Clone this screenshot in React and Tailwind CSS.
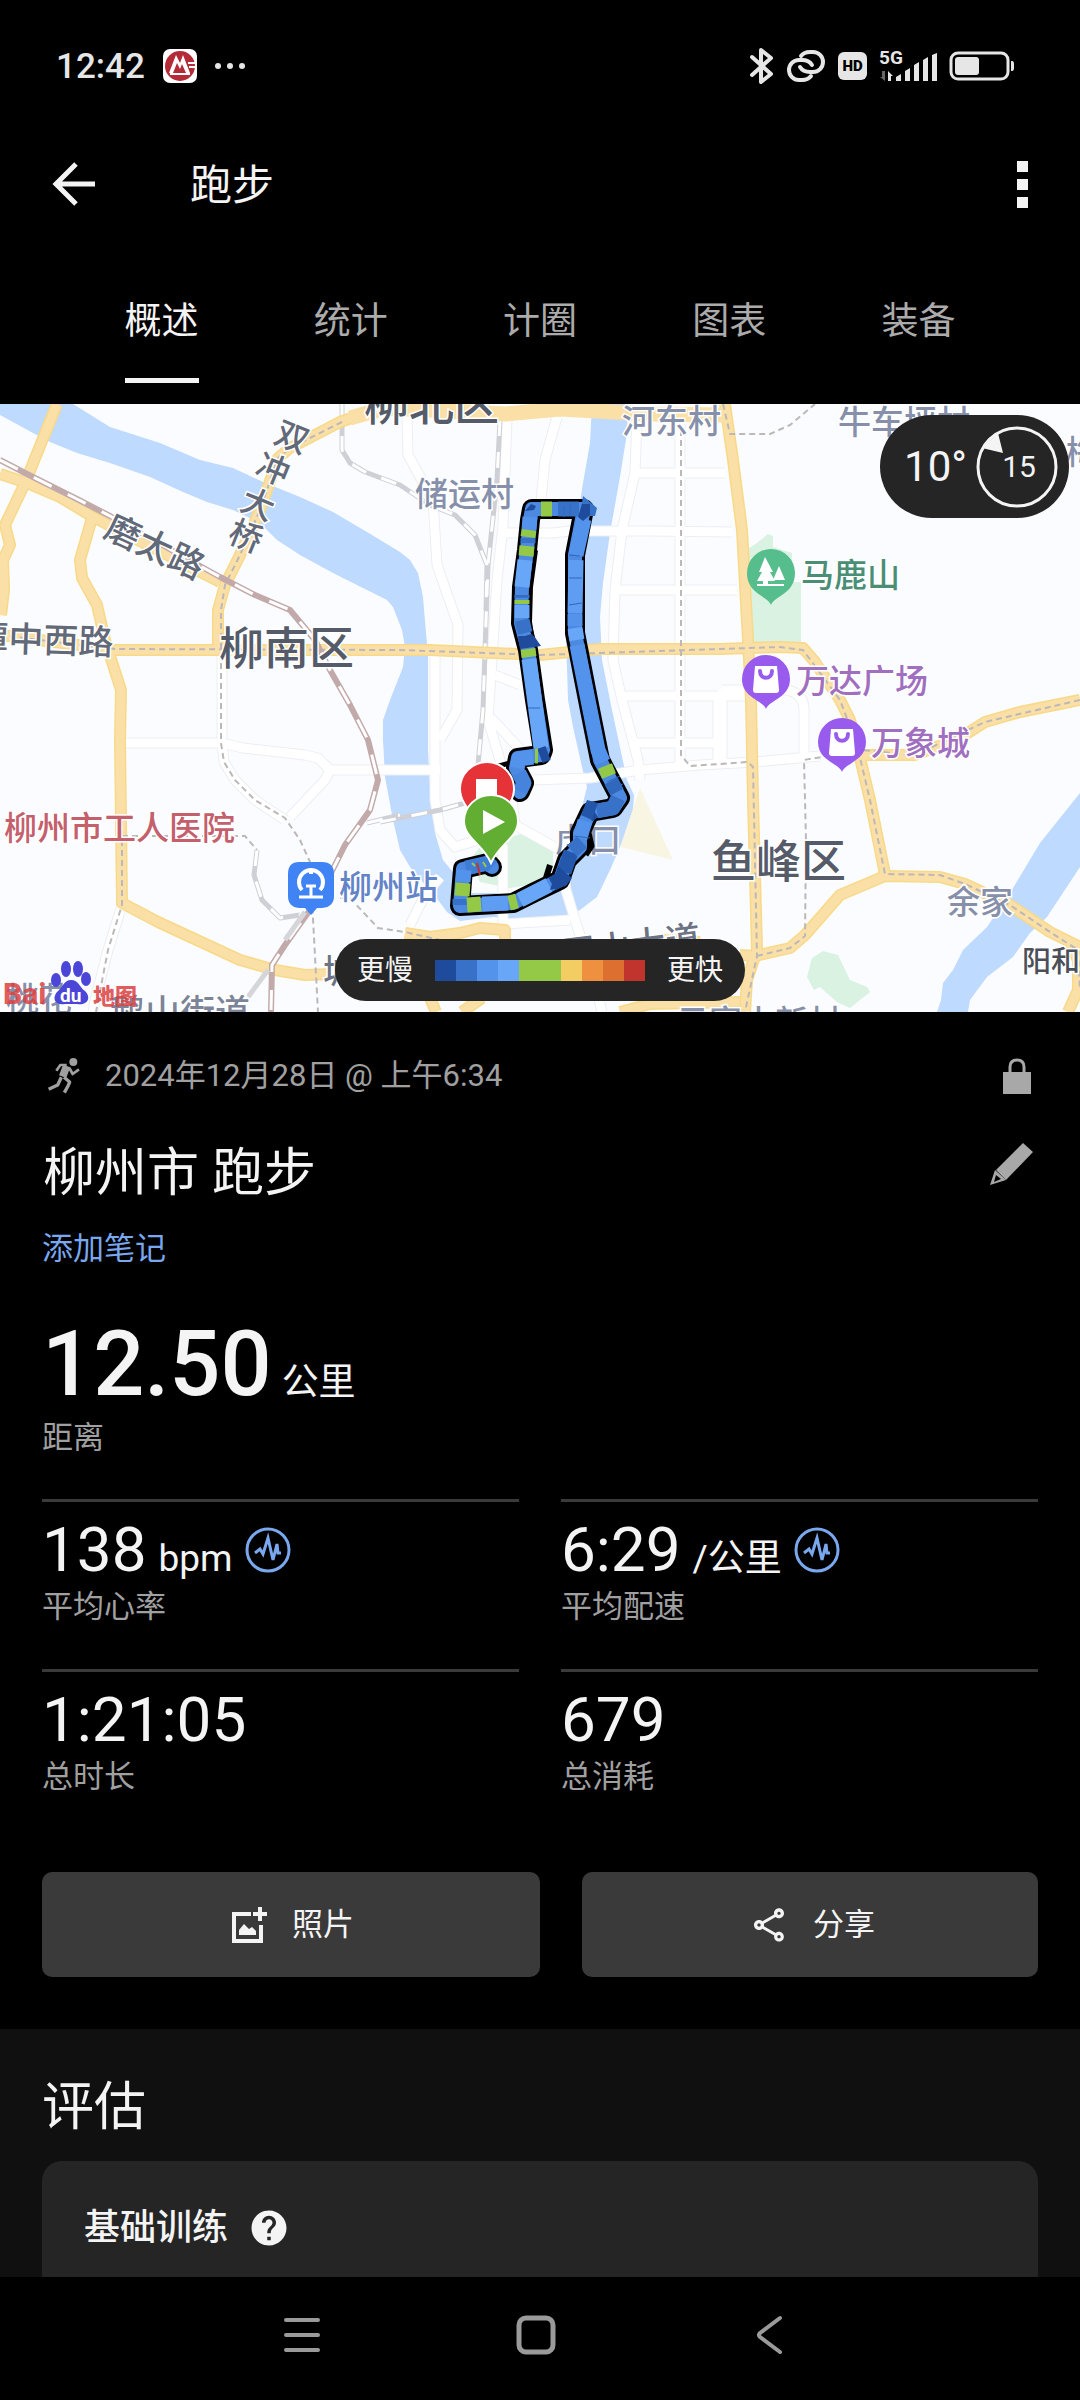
import { useState } from "react";
import { MdHelp, MdOutlineShare } from "react-icons/md";

const TABS = ["概述", "统计", "计圈", "图表", "装备"];

const PACE_COLORS = [
  "#1f4b9c", "#3772c8", "#5393eb", "#68a6f8", "#93c947",
  "#93c947", "#f3cd62", "#ee9040", "#dd7030", "#c0342d",
];

const STATS = [
  { value: "138", unit: "bpm", label: "平均心率", zones: true },
  { value: "6:29", unit: "/公里", label: "平均配速", zones: true },
  { value: "1:21:05", label: "总时长" },
  { value: "679", label: "总消耗" },
];

// Map geometry, all in the map's own viewBox units
const RIVERS = [
  "M0 4H73L110 27 160 43 200 60 233 68 263 82 300 97 333 112 367 132 400 152 410 160 418 173 423 197 426 233 428 253V350L430 387 435 433 443 460 470 493H520L540 490 557 467 577 427 587 387 582 367 573 327 568 300 567 267 565 217 567 187 583 83 590 43 592 4H628L627 33 620 77 610 133 603 183 600 217 602 260 612 310 627 380 634 395 632 427 620 447 610 470 597 497 580 510 563 517 537 521 493 517 460 521 447 512 438 500 410 467 400 450 393 420 385 377 383 340 383 320 390 300 403 267 405 247 402 230 393 207 387 200 367 190 333 173 300 155 277 140 260 123 233 110 207 102 183 92 150 77 110 63 77 53 50 42 33 33 0 15Z",
  "M1080 393 1040 443 1010 493 987 527 963 550 953 570 943 583 941 600 937 612H968L970 600 987 577 1013 557 1030 533 1047 517 1080 467Z",
];

const PARKS = [
  "M480 447 523 433 553 447V467L547 482 510 488 480 482 470 460Z",
  "M743 152 757 143 768 134 773 136V147L792 153V182H801V242H752Z",
  "M823 551 838 555 850 580 867 587 870 592 850 608 837 602 820 587 814 590 807 577 812 558Z",
];

const STREETS = [
  "M123 343H222L243 348 305 355 318 358 330 370 325 380 290 417",
  "M330 370H440M222 250V343L224 362 235 380 255 400 285 420",
  "M407 17 408 55 433 100 437 165 458 225 457 310 440 340",
  "M435 257V400L440 430 455 447 478 440M440 477 425 495 410 525",
  "M557 17 545 60 540 110M507 20 503 125 497 180 492 260 488 320 512 400 515 425 560 450 566 490 575 520 590 565 602 612",
  "M503 133H553L570 131H650L732 132M495 275 520 285M491 318 530 360",
  "M637 17 635 73 622 130 615 190 613 260 622 300 638 360 640 380",
  "M636 73H725M615 190H737M680 10V366M625 296H757M636 343H720M718 296V362",
  "M532 380 590 378 640 370 700 365 755 362 820 356",
  "M722 290H785Q804 292 804 310V357M722 290V362",
  "M503 445V530M122 505 108 550 95 600 93 612M505 524 570 520",
];

const HIGHWAYS = [
  "M57 4 25 83 5 125 10 145 3 160 4 190 1 215",
  "M0 74 27 83 60 97 95 118 220 182",
  "M92 118 80 160 82 178 97 205 105 240 113 265 121 290 120 340 122 503 158 522 240 560 275 570 305 575 332 574",
  "M0 235 55 242 115 250H220L430 250 540 255 600 249 720 249 780 247 803 248 815 262 840 300 850 320 857 345 870 400 885 474",
  "M380 8 340 22 290 48 278 58 260 110 240 155 225 185 218 210V250",
  "M725 4 733 60 742 130 748 240 751 300 753 400 757 550 747 580 745 612",
  "M740 555 755 556 790 548 805 535 840 495 885 476 940 477 965 484 1010 505 1050 532 1080 547M1070 545 1078 560V590L1068 612",
  "M862 355 915 355 960 338 985 322 1020 312 1080 300",
  "M405 533 430 537 460 533 480 528 505 530V545M430 598 436 612M482 598 462 612",
  "M620 612 650 604 740 602M660 540 700 542",
];

const SUBWAYS = [
  "M342 22 290 48 278 58 260 110 240 155 225 185 221 210 221 343 224 362 235 380 255 400 285 418 300 440 310 462 312 500 318 612",
  "M0 235 55 242 115 249 400 250 540 255 720 249 780 247 803 250 815 266 840 300 857 345 870 400 885 474 940 475 965 484 1010 505 1050 532 1078 550 1080 590",
  "M122 420V505L108 550 96 612M122 436H245L257 450",
  "M681 30V355L690 366 748 362 753 367 757 556 745 612M757 556 790 548 805 536 806 440 804 360 862 350 915 355 985 322 1080 300",
  "M723 4 730 34H770L790 25 815 4M340 498H350L378 528 405 532 440 540",
];

const GREY_RAILS = [
  "M342 4V50L350 63 365 72 400 85 430 105 455 115 475 135 487 165 486 210",
  "M500 20 497 80 488 165 485 250 483 310 478 365",
  "M380 422 440 410 465 403M367 423 400 415M257 450 254 475 262 500 280 518 300 515",
];

const RAIL = "M0 60 27 74 75 98 110 116 220 177 255 195 290 210 315 240 330 270 350 305 368 340 378 380 370 410 345 445 330 475 310 510 285 545 272 565 271 612";

const ROUTE = "492 467 488 463 463 469 460 506 513 503 535 492 560 480 567 460 580 447 580 433 590 412 613 408 620 398 600 360 590 310 575 233 575 155 584 109 532 109 530 120 527 150 522 187 521 223 528 250 535 300 543 350 541 355 518 358 516 368 524 383 520 392";

const ROUTE_PARTS = [
  ["#3f7cd6", "492 467 488 463 466 468"],
  ["#5393eb", "464 470 463 482"],
  ["#93c947", "463 483 462 496"],
  ["#3772c8", "460 499 460 505"],
  ["#93c947", "467 505 481 504"],
  ["#5e9df1", "482 504 508 503"],
  ["#93c947", "509 503 517 501"],
  ["#68a6f8", "520 500 549 485"],
  ["#1f4b9c", "552 484 563 478"],
  ["#2458ac", "564 472 571 452"],
  ["#3772c8", "572 451 582 442"],
  ["#5393eb", "580 438 585 421"],
  ["#1f4b9c", "588 415 594 411"],
  ["#3772c8", "597 411 613 408 618 398"],
  ["#2f68bd", "617 392 611 381"],
  ["#93c947", "609 376 605 366"],
  ["#5393eb", "603 362 598 350 590 310 577 245"],
  ["#68a6f8", "577 240 575 228"],
  ["#5393eb", "575 226 575 214"],
  ["#5e9df1", "575 213 576 160"],
  ["#5393eb", "576 155 584 119"],
  ["#3772c8", "579 109 558 109"],
  ["#93c947", "552 109 541 109"],
  ["#5393eb", "530 117 529 130"],
  ["#93c947", "529 130 528 137"],
  ["#3772c8", "528 138 528 143"],
  ["#93c947", "527 146 526 156"],
  ["#68a6f8", "525 160 522 187"],
  ["#3772c8", "522 195 522 198"],
  ["#93c947", "522 200 522 204"],
  ["#68a6f8", "522 205 522 218"],
  ["#3772c8", "522 220 525 233"],
  ["#1f4b9c", "525 236 528 246"],
  ["#93c947", "528 249 529 257"],
  ["#68a6f8", "529 259 541 348"],
  ["#1f4b9c", "548 353 540 356"],
  ["#93c947", "538 356 535 356"],
  ["#5393eb", "533 357 519 359 517 368"],
  ["#4583dc", "519 373 524 383 520 391"],
];

const LABELS = [
  { text: "柳北区", x: 364, y: 21, size: 45, color: "#555b69" },
  { text: "柳南区", x: 219, y: 265, size: 45, color: "#555b69" },
  { text: "鱼峰区", x: 711, y: 478, size: 45, color: "#555b69" },
  { text: "河东村", x: 622, y: 33, size: 33, color: "#8790aa" },
  { text: "牛车坪村", x: 838, y: 34, size: 33, color: "#8790aa" },
  { text: "储运村", x: 415, y: 106, size: 33, color: "#8790aa" },
  { text: "梅", x: 1066, y: 64, size: 33, color: "#8790aa" },
  { text: "余家", x: 947, y: 514, size: 33, color: "#8790aa" },
  { text: "虎口", x: 555, y: 452, size: 33, color: "#8790aa" },
  { text: "阳和", x: 1022, y: 572, size: 29, color: "#4b4f5a" },
  { text: "屏山大道", x: 563, y: 567, size: 35, color: "#6c7385", rotate: -7 },
  { text: "城", x: 323, y: 583, size: 33, color: "#6c7385" },
  { text: "桃花", x: 6, y: 611, size: 33, color: "#8790aa" },
  { text: "鹅山街道", x: 110, y: 625, size: 35, color: "#7b8499" },
  { text: "云富山新村", x: 676, y: 634, size: 33, color: "#8790aa" },
  { text: "潭中西路", x: -27, y: 250, size: 35, color: "#626979", rotate: 2 },
  { text: "磨太路", x: 102, y: 136, size: 35, color: "#626979", rotate: 25 },
  { text: "柳州市工人医院", x: 4, y: 440, size: 33, color: "#c4606c" },
  { text: "柳州站", x: 339, y: 499, size: 33, color: "#6384c8" },
  { text: "马鹿山", x: 801, y: 187, size: 33, color: "#4a8f75" },
  { text: "万达广场", x: 796, y: 293, size: 33, color: "#a06fc0" },
  { text: "万象城", x: 871, y: 355, size: 33, color: "#a06fc0" },
];

// Bridge name runs down the road, one tilted character at a time
const BRIDGE_LABEL = [
  { char: "双", x: 292, y: 37 },
  { char: "冲", x: 273, y: 69 },
  { char: "大", x: 258, y: 104 },
  { char: "桥", x: 246, y: 136 },
];

function RouteMap() {
  return (
    <svg className="block w-full h-full" viewBox="0 4 1080 608" preserveAspectRatio="xMidYMid slice" fill="none" role="img" aria-label="路线地图">
      <rect y="4" width="1080" height="608" fill="#fbfcff" />
      {RIVERS.map(d => <path key={d} d={d} fill="#bfdaff" />)}
      <path d="M443 455 480 440 560 452 550 490 470 490Z" fill="#fbfcff" />
      {PARKS.map(d => <path key={d} d={d} fill="#d9f2e1" />)}
      <path d="M640 388 673 460 620 447Z" fill="#f8f6e3" />

      <g strokeLinejoin="round">
        {STREETS.map(d => <path key={d} d={d} stroke="#eceef3" strokeWidth="11" />)}
        {STREETS.map(d => <path key={d} d={d} stroke="#ffffff" strokeWidth="9" />)}
        {GREY_RAILS.map(d => <path key={d} d={d} stroke="#cfd0d6" strokeWidth="5" />)}
        {GREY_RAILS.map(d => <path key={d} d={d} stroke="#fff" strokeWidth="3" strokeDasharray="16 16" />)}
        {HIGHWAYS.map(d => <path key={d} d={d} stroke="#f7d988" strokeWidth="12" />)}
        {HIGHWAYS.map(d => <path key={d} d={d} stroke="#fae0a6" strokeWidth="9" />)}
        <path d="M350 18 385 8 430 10 505 14 560 9 650 14 728 15" stroke="#fae0a6" strokeWidth="15" />
        <path d="M500 10V20" stroke="#fae0a6" strokeWidth="18" />
        {SUBWAYS.map(d => <path key={d} d={d} stroke="#bdb8b8" strokeWidth="2" strokeDasharray="6 4" />)}
        <path d={RAIL} stroke="#c3aaaa" strokeWidth="6" />
        <path d={RAIL} stroke="#fff" strokeWidth="3" strokeDasharray="20 18" />
        <path d="M305 512 285 540M268 570 248 597" stroke="#d5d5da" strokeWidth="5" />
      </g>

      {LABELS.map(l => (
        <text
          key={l.text}
          x={l.x}
          y={l.y}
          fontSize={l.size}
          fill={l.color}
          stroke="#fff"
          strokeWidth="3"
          paintOrder="stroke"
          fontWeight="500"
          transform={l.rotate ? `rotate(${l.rotate} ${l.x} ${l.y})` : undefined}
        >
          {l.text}
        </text>
      ))}
      {BRIDGE_LABEL.map(c => (
        <text key={c.char} x={c.x} y={c.y + 12} fontSize="33" fill="#626979" stroke="#fff" strokeWidth="3" paintOrder="stroke" fontWeight="500" textAnchor="middle" transform={`rotate(22 ${c.x} ${c.y})`}>
          {c.char}
        </text>
      ))}

      {/* recorded track: black casing, then the pace colours */}
      <g strokeLinejoin="round">
        <polyline points={ROUTE} stroke="#000" strokeWidth="20" strokeLinecap="round" />
        <path d="M535 150 530 187 529 222 547 340M550 465 546 478" stroke="#000" strokeWidth="6" />
        <path d="M588 428 592 446 586 455M495 367 510 363" stroke="#000" strokeWidth="5" />
        <polyline points={ROUTE} stroke="#4c8ae2" strokeWidth="14" strokeLinecap="round" />
        {ROUTE_PARTS.map(([color, points]) => <polyline key={points} points={points} stroke={color} strokeWidth="15" />)}
        <path d="M583 96 597 108 595 116 580 116Z" fill="#3772c8" />
        <path d="M582 104 590 104 590 115 583 121 578 117Z" fill="#1f4b9c" />
        <path d="M525 111 531 104 536 106 534 110Z" fill="#1f4b9c" />
        <path d="M518 236 534 236 541 246 520 249Z" fill="#1f4b9c" />
        <path d="M587 400 598 403 592 420 581 415Z" fill="#2355a8" />
        <path d="M558 466 572 478 566 486 550 490Z" fill="#1f4b9c" />
        <path d="M607 382 620 376M610 388 623 384M569 155 580 156M569 178H582M569 205 582 203M564 106V117M570 103V116M515 196H528M528 308H540M574 436 590 438" stroke="#2f68bd" strokeWidth="1" />
        <path d="M477 463 480 475" stroke="#c0342d" strokeWidth="2" />
        <path d="M472 463 475 466M483 462 486 467" stroke="#93c947" strokeWidth="2" />
      </g>

      {/* finish and start pins */}
      <g stroke="#fff" strokeWidth="2">
        <path d="M487 434C475 415 460 405 460 389A27 27 0 0 1 514 389C514 405 499 415 487 434Z" fill="#e63338" />
        <rect x="477" y="380" width="19" height="19" fill="#fff" />
        <path d="M491 463C482 443 464 438 464 421A27 26 0 0 1 518 421C518 438 500 443 491 463Z" fill="#62ae33" />
      </g>
      <path d="M483 410 505 422 483 434Z" fill="#fff" />

      {/* park */}
      <path d="M771 205C768 196 747 194 747 173A24 24 0 0 1 795 173C795 194 774 196 771 205Z" fill="#56bd8d" />
      <path d="M765 157 773 172H770L775 181H768V184H784V186H757V184H763V181H757L762 172H759Z" fill="#fff" />
      <path d="M779 166 785 180H773Z" fill="#fff" />
      {/* malls */}
      {[[766, 279], [842, 342]].map(([x, y]) => (
        <g key={x} transform={`translate(${x} ${y})`}>
          <path d="M0 30C-3 21 -24 19 -24 0A24 24 0 0 1 24 0C24 19 3 21 0 30Z" fill="#985bee" />
          <path d="M-11 -13H11L13 11Q13 14 10 14H-10Q-13 14 -13 11Z" fill="#fff" />
          <path d="M-6 -8C-6 1 6 1 6 -8" stroke="#985bee" strokeWidth="4" strokeLinecap="round" />
        </g>
      ))}
      {/* railway station */}
      <path d="M299 462H322Q334 462 334 474V496Q334 507 322 508H317L311 515 305 508H299Q288 507 288 496V474Q288 462 299 462Z" fill="#3f83f5" />
      <path d="M302 490A12 12 0 1 1 320 490M311 470V474" stroke="#fff" strokeWidth="4" />
      <path d="M306 486H316M311 486V497M299 497H323" stroke="#fff" strokeWidth="3" />

      {/* map provider logo */}
      <g fontWeight="800" fill="#dc3f3f" fillOpacity="0.85">
        <text x="3" y="604" fontSize="30">Bai</text>
        <text x="93" y="604" fontSize="22">地图</text>
      </g>
      <g fill="#4b45d8">
        <ellipse cx="66" cy="569" rx="5" ry="8" />
        <ellipse cx="78" cy="569" rx="5" ry="8" />
        <ellipse cx="56" cy="580" rx="5" ry="7" />
        <ellipse cx="86" cy="579" rx="5" ry="7" />
        <path d="M71 580C79 580 79 587 85 591 92 598 87 606 77 604H65C55 606 51 598 58 591 63 587 64 580 71 580Z" />
      </g>
      <text x="60" y="602" fontSize="19" fontWeight="700" fill="#fff">du</text>
    </svg>
  );
}

function StatusBar() {
  return (
    <div className="h-[132px] shrink-0 pl-14 pr-[65px] flex items-center justify-between text-[#e6e6e6]">
      <div className="flex items-center gap-[18px]">
        <span className="text-[35px] leading-none font-medium">12:42</span>
        <svg className="w-[34px] h-[34px]" viewBox="0 0 34 34" fill="none">
          <rect width="34" height="34" rx="7" fill="#fff" />
          <circle cx="17" cy="17" r="15" fill="#b42a37" />
          <path d="M6 24 13 6 17 14 20 6 27 24H23L19 15 17 20 14 14 10 24Z" fill="#fff" />
          <path d="M7 25H27M25 14H32M26 18H32" stroke="#fff" strokeWidth="2" />
        </svg>
        <span className="flex gap-1.5">
          <i className="size-1.5 rounded-full bg-[#e6e6e6]" />
          <i className="size-1.5 rounded-full bg-[#e6e6e6]" />
          <i className="size-1.5 rounded-full bg-[#e6e6e6]" />
        </span>
      </div>
      <div className="flex items-center gap-3">
        <svg className="w-6 h-9" viewBox="0 0 24 36" fill="none" stroke="currentColor" strokeWidth="4" strokeLinejoin="round" strokeLinecap="round">
          <path d="M2 9 21 26 11 34V2L21 10 2 27" />
        </svg>
        <svg className="w-10 h-8" viewBox="0 0 40 32" fill="none" stroke="currentColor" strokeWidth="4" strokeLinecap="round">
          <path d="M15 6Q18 2 24 2H27A10 10 0 0 1 27 22H24Q17 22 14 17" />
          <path d="M25 26Q22 30 16 30H13A10 10 0 0 1 13 10H16Q23 10 26 15" />
        </svg>
        <span className="w-[29px] h-7 rounded-md bg-[#e6e6e6] text-black text-[15px] leading-7 font-black text-center">HD</span>
        <div className="relative w-[58px] h-8">
          <span className="block text-[19px] leading-4 font-bold">5G</span>
          <svg className="absolute inset-0 w-[58px] h-8" viewBox="0 0 58 32" fill="currentColor">
            <path d="M3 21H6V31L1 27H3Z" fill="#666" />
            <path d="M9 31V21L14 26H12V31ZM17 31V27L22 24V31ZM26 31V21L31 18V31ZM35 31V15L40 12V31ZM44 31V10L49 7V31ZM53 31V5L58 3V31Z" />
          </svg>
        </div>
        <svg className="w-[66px] h-[30px]" viewBox="0 0 66 30" fill="none">
          <rect x="2" y="2" width="57" height="26" rx="7" stroke="currentColor" strokeWidth="3" />
          <rect x="6" y="6" width="24" height="18" rx="3" fill="currentColor" />
          <path d="M62 10H63Q65 10 65 13V17Q65 20 63 20H62Z" fill="currentColor" />
        </svg>
      </div>
    </div>
  );
}

function ZonesIcon() {
  return (
    <svg className="size-[46px] self-center" viewBox="0 0 46 46" fill="none" stroke="#79a8ee">
      <circle cx="23" cy="23" r="21" strokeWidth="3" />
      <path d="M10 26 15 22 18 27 23 11 28 33 32 17 33 26H36" strokeWidth="3" />
    </svg>
  );
}

function RunnerIcon() {
  return (
    <svg className="w-9 h-10" viewBox="132 136 108 120" fill="none" stroke="#a0a0a0" strokeLinejoin="round">
      <circle cx="214" cy="154" r="12" fill="#a0a0a0" stroke="none" />
      <path d="M163 180 175 163 194 163M202 172 212 190 231 176" strokeWidth="8" />
      <path d="M194 166 182 198" strokeWidth="23" />
      <path d="M186 200 203 214 198 226 187 246" strokeWidth="10" />
      <path d="M178 200 167 223 140 236" strokeWidth="10" />
    </svg>
  );
}

export default function App() {
  const [activeTab, setActiveTab] = useState(TABS[0]);

  return (
    <div className="min-h-screen flex flex-col bg-black text-[#f4f4f4] font-['Roboto','Noto_Sans_CJK_SC',sans-serif]">
      <StatusBar />

      <header className="h-[104px] shrink-0 flex items-center px-[52px]">
        <button aria-label="返回" className="w-[44px] h-[44px]">
          <svg viewBox="0 0 44 44" fill="none" stroke="currentColor" strokeWidth="5">
            <path d="M43 22H5M24 2 4 22 24 42" />
          </svg>
        </button>
        <h1 className="ml-[94px] pt-1 text-[42px] leading-none">跑步</h1>
        <button aria-label="更多" className="ml-auto flex flex-col gap-[7px]">
          <i className="size-[11px] bg-[#f4f4f4]" />
          <i className="size-[11px] bg-[#f4f4f4]" />
          <i className="size-[11px] bg-[#f4f4f4]" />
        </button>
      </header>

      <nav className="grid grid-cols-5 shrink-0 px-[67px]">
        {TABS.map(tab => (
          <button
            key={tab}
            onClick={() => setActiveTab(tab)}
            className={`flex flex-col items-center pt-16 pb-[21px] text-[37px] leading-[44px] ${tab === activeTab ? "text-[#f4f4f4]" : "text-[#ababab]"}`}
          >
            <span>{tab}</span>
            <span className={`mt-[34px] w-[74px] h-[5px] ${tab === activeTab ? "bg-[#f4f4f4]" : ""}`} />
          </button>
        ))}
      </nav>

      <section className="relative h-[608px] shrink-0 overflow-hidden">
        <RouteMap />

        <div className="absolute top-[11px] right-[11px] h-[103px] pl-6 pr-[11px] flex items-center gap-[9px] rounded-full bg-[#252525]">
          <span className="text-[42px] leading-none">10°</span>
          <div className="relative size-[82px] flex items-center justify-center">
            <svg className="absolute inset-0" viewBox="0 0 82 82" fill="none">
              <circle cx="41" cy="41" r="39" stroke="#f4f4f4" strokeWidth="3" />
              <path d="M22 7 27 27 6 22Z" fill="#f4f4f4" />
            </svg>
            <span className="pl-1 text-[30px] leading-none">15</span>
          </div>
        </div>

        <div className="absolute inset-x-0 bottom-[11px] flex justify-center">
          <div className="h-[62px] px-[22px] flex items-center gap-[22px] rounded-full bg-[#252525] text-[28px] leading-none">
            <span className="pt-0.5">更慢</span>
            <div className="flex">
              {PACE_COLORS.map((color, i) => (
                <i key={i} className="size-[21px]" style={{ backgroundColor: color }} />
              ))}
            </div>
            <span className="pt-0.5">更快</span>
          </div>
        </div>
      </section>

      <main className="shrink-0 px-[42px] pt-10 pb-[52px]">
        <div className="h-12 pl-1 flex items-center text-[31px] text-[#a0a0a0]">
          <RunnerIcon />
          <span className="ml-[23px] leading-10">2024年12月28日 @ 上午6:34</span>
          <svg className="ml-auto mr-1.5 w-[30px] h-9" viewBox="0 0 30 36">
            <path d="M1 14H29V36H1Z" fill="#a8a8a8" />
            <path d="M8 17V9Q8 2 15 2T22 9V17" fill="none" stroke="#a8a8a8" strokeWidth="3" />
          </svg>
        </div>

        <div className="mt-[38px] flex justify-between items-start">
          <h2 className="pl-px text-[52px] leading-[72px]">柳州市 跑步</h2>
          <button aria-label="编辑" className="h-[52px] mr-1 flex items-center">
            <svg className="size-11" viewBox="0 0 44 44" fill="#a8a8a8">
              <path d="M33 1 43 10 16 38 6 28Z" />
              <path d="M5 28 16 38 0 43ZM6 33 4 40 11 37Z" fillRule="evenodd" />
            </svg>
          </button>
        </div>

        <a href="#notes" className="mt-[19px] block w-fit text-[31px] leading-10 text-[#79a8ee]">添加笔记</a>

        <div className="mt-[51px] flex items-baseline gap-2.5">
          <span className="text-[90px] leading-[90px] font-medium">12.50</span>
          <span className="text-[37px] leading-none">公里</span>
        </div>
        <p className="mt-2 text-[31px] leading-10 text-[#a0a0a0]">距离</p>

        <div className="mt-[41px] grid grid-cols-2 gap-x-[42px] gap-y-[42px]">
          {STATS.map(stat => (
            <div key={stat.label} className="border-t-3 border-[#3a3a3a] pt-[17px]">
              <div className="h-[62px] flex items-baseline gap-3">
                <span className="text-[62px] leading-[62px]">{stat.value}</span>
                {stat.unit && <span className="text-[37px] leading-none">{stat.unit}</span>}
                {stat.zones && <ZonesIcon />}
              </div>
              <p className="mt-1.5 text-[31px] leading-10 text-[#a0a0a0]">{stat.label}</p>
            </div>
          ))}
        </div>

        <div className="mt-[75px] grid grid-cols-[498fr_456fr] gap-[42px] text-[31px]">
          <button className="h-[105px] pl-1 flex items-center justify-center gap-6 rounded-[10px] bg-[#3a3a3a]">
            <svg className="size-9" viewBox="0 0 36 36" fill="none" stroke="currentColor">
              <path d="M19 7H2V34H29V18" strokeWidth="4" />
              <path d="M28 0V14M21 7H35" strokeWidth="4" />
              <path d="M7 28V23L12 17 17 22 20 20 24 24V28Z" fill="currentColor" stroke="none" />
            </svg>
            <span className="pt-0.5">照片</span>
          </button>
          <button className="h-[105px] pl-1 flex items-center justify-center gap-6 rounded-[10px] bg-[#3a3a3a]">
            <MdOutlineShare className="size-10" />
            <span className="pt-0.5">分享</span>
          </button>
        </div>
      </main>

      <section className="grow flex flex-col px-[42px] pt-[43px] bg-[#101010]">
        <h2 className="text-[52px] leading-[72px]">评估</h2>
        <div className="mt-[17px] grow px-[42px] pt-[45px] pb-[27px] rounded-t-[20px] bg-[#252525]">
          <div className="flex items-center gap-5">
            <h3 className="text-[36px] leading-[44px] font-medium">基础训练</h3>
            <button aria-label="帮助">
              <MdHelp className="size-[42px]" />
            </button>
          </div>
        </div>
      </section>

      <footer className="h-[124px] shrink-0 flex items-center justify-center pr-2 pb-2 text-[#9a9a9a]">
        <button aria-label="最近任务" className="w-[234px] flex justify-center">
          <svg className="size-10" viewBox="0 0 40 40" fill="none" stroke="currentColor" strokeWidth="4" strokeLinecap="round">
            <path d="M4 5H36M4 20H36M4 35H36" />
          </svg>
        </button>
        <button aria-label="主屏幕" className="w-[234px] flex justify-center">
          <svg className="size-10" viewBox="0 0 40 40" fill="none" stroke="currentColor" strokeWidth="5">
            <rect x="3" y="3" width="34" height="34" rx="7" />
          </svg>
        </button>
        <button aria-label="返回上一页" className="w-[234px] flex justify-center">
          <svg className="size-10" viewBox="0 0 40 40" fill="none" stroke="currentColor" strokeWidth="4" strokeLinecap="round" strokeLinejoin="round">
            <path d="M30 3 10 18Q8 20 10 22L30 37" />
          </svg>
        </button>
      </footer>
    </div>
  );
}
